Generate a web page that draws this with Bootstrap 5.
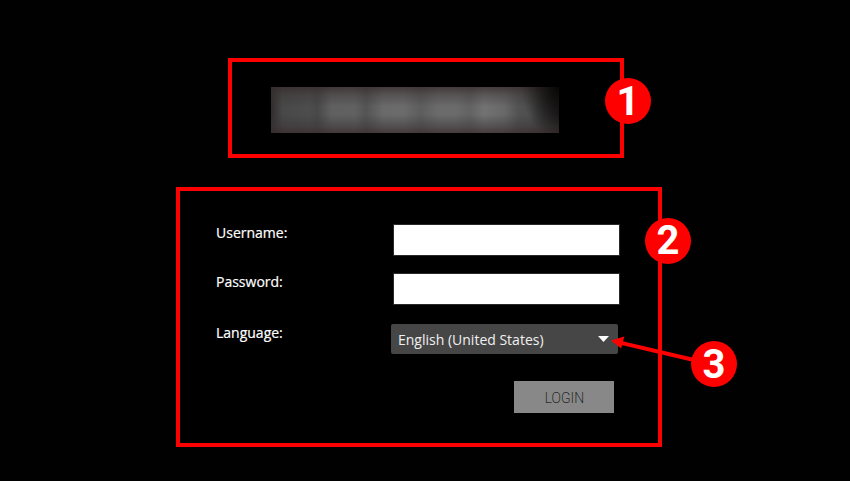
<!DOCTYPE html>
<html lang="en">
<head>
<meta charset="utf-8">
<meta name="viewport" content="width=device-width, initial-scale=1">
<title>Login</title>
<link rel="stylesheet" href="https://cdn.jsdelivr.net/npm/bootstrap@5.3.0/dist/css/bootstrap.min.css">
<style>
body { background: #010101; font-family: "Open Sans", sans-serif; font-size: 14px; height: 481px; overflow: hidden; }
.outlined { border: 4px solid #f00; background: #000; }
.logo-box { width: 396px; height: 100px; margin: 58px 0 0 228px; padding: 25px 0 0 39px; }
.brand-blur { width: 288px; height: 46px;
  background:
    radial-gradient(ellipse 38px 50px at 100% 0, #0a0707 5%, #0a070700 100%),
    linear-gradient(#352a2bc0 0, #3a323270 16%, #40404000 42%, #40404000 60%, #3c343680 85%, #382b2dc0 100%),
    linear-gradient(90deg, #302c2c 0, #484848 4%, #4d4d4d 13%, #484848 16%, #606060 21%, #616161 29%, #545454 33%, #6a6a6a 39%, #6b6b6b 46%, #5d5d5d 52%, #6b6b6b 58%, #6b6b6b 64%, #626262 69%, #727272 74%, #686868 81%, #525252 86%, #4e4e4e 90%, #3a3a3a 95%, #262424 100%); }
.form-box { width: 486px; height: 260px; margin: 29px 0 0 176px; padding: 33px 36px 0; }
.form-box label { width: 177px; color: #fff; line-height: 17px; -webkit-text-stroke: .2px #fff; }
.login-input { width: 227px; height: 32px; border: 1px solid #292929; border-radius: 0; background: #fff; }
.row-gap { margin-bottom: 17px; }
.lang-row { margin-top: 19px; }
.lang-select { width: 227px; height: 30px; margin-left: -2px; padding: 0 9px 0 7px; background: #464646; color: #f0f0f0; border: 0; border-radius: 2px; font-size: 14px; }
.login-btn { width: 100px; height: 32px; margin: 27px 8px 0 0; background: #888; color: #000; border: 0; border-radius: 0; font: 200 14px/34px Roboto, sans-serif; padding: 0 0 0 1px; }
.login-btn:hover { background: #888; color: #000; }
.marker { width: 46px; height: 46px; background: #f00; color: #fff; font: 700 40px/46px Roboto, sans-serif; }
.marker-1 { left: 605px; top: 78px; line-height: 48px; }
.marker-2 { left: 645px; top: 218px; }
.marker-3 { left: 691px; top: 341px; line-height: 48px; }
.pointer { left: 600px; top: 325px; }
</style>
<script src="https://cdn.jsdelivr.net/npm/bootstrap@5.3.0/dist/js/bootstrap.bundle.min.js"></script>
</head>
<body class="position-relative">
<main class="d-flex flex-column">
  <header class="outlined logo-box"><div class="brand-blur"></div></header>
  <form class="outlined form-box">
    <div class="d-flex row-gap">
      <label for="user">Username:</label>
      <input id="user" type="text" class="login-input">
    </div>
    <div class="d-flex">
      <label for="pass">Password:</label>
      <input id="pass" type="password" class="login-input">
    </div>
    <div class="d-flex lang-row">
      <label for="lang">Language:</label>
      <button id="lang" type="button" class="lang-select d-flex align-items-center justify-content-between">
        <span>English (United States)</span>
        <svg width="11" height="6" viewBox="0 0 11 6"><path d="M0 0H11L5.5 6Z" fill="#fff"/></svg>
      </button>
    </div>
    <div class="d-flex justify-content-end"><button type="button" class="btn login-btn">LOGIN</button></div>
  </form>
</main>
<svg class="position-absolute pointer" width="100" height="45" viewBox="0 0 100 45"><path d="M20 17.6L94 35" stroke="#f00" stroke-width="4"/><path d="M11 15.5L24.3 11.5L21.2 23.6Z" fill="#f00"/></svg>
<div class="position-absolute marker marker-1 rounded-circle text-center">1</div>
<div class="position-absolute marker marker-2 rounded-circle text-center">2</div>
<div class="position-absolute marker marker-3 rounded-circle text-center">3</div>
</body>
</html>
